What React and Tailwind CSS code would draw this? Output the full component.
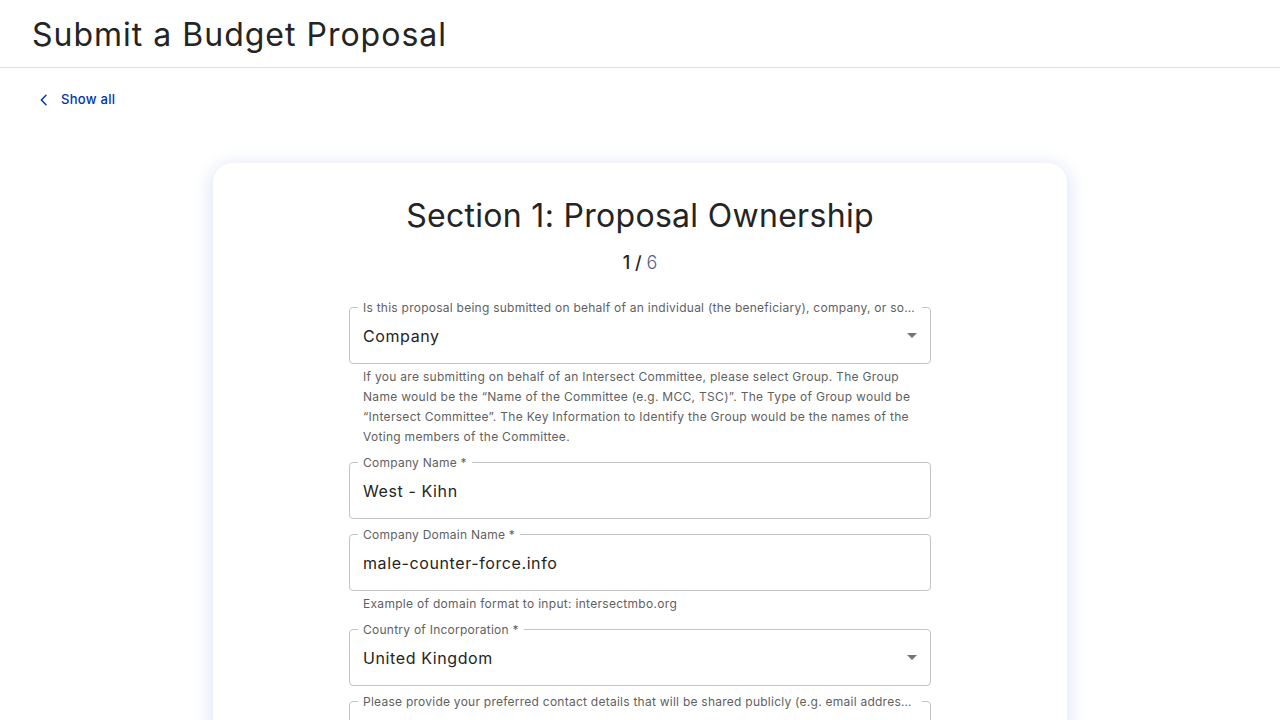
import React from "react";

const FONT = { fontFamily: "Inter, 'Noto Sans', sans-serif" };

function Caret() {
  return (
    <svg width="10" height="5" viewBox="0 0 10 5" className="shrink-0">
      <path d="M0 0 L10 0 L5 5 Z" fill="#757575" />
    </svg>
  );
}

function Field({ label, value, select, helper }) {
  return (
    <div className="flex flex-col">
      <fieldset className="border border-[#c4c4c4] rounded-[4px] px-[8px] pb-[7px] m-0 min-w-0">
        <legend className="px-[5px] text-[12px] leading-4 tracking-[0.25px] text-[#5f5f5f] max-w-full overflow-hidden text-ellipsis whitespace-nowrap">
          {label}
        </legend>
        <div className="h-10 px-[5px] flex items-center justify-between">
          <span className="text-[16px] tracking-[0.6px] text-[#242424]">{value}</span>
          {select && <Caret />}
        </div>
      </fieldset>
      {helper && (
        <p className="mt-[3px] mx-[14px] text-[12px] leading-5 tracking-[0.3px] text-[#5f5f5f]">{helper}</p>
      )}
    </div>
  );
}

export default function App() {
  return (
    <div className="w-[1280px] h-[720px] overflow-hidden bg-white text-[#242424]" style={FONT}>
      <header className="h-[68px] border-b border-[#e0e0e0] flex items-center px-8">
        <h1 className="text-[32px] leading-10 font-normal tracking-[1px] text-[#242424] mt-[3px]">Submit a Budget Proposal</h1>
      </header>
      <div className="px-[36px] pt-[22px] flex items-center gap-[9px]">
        <svg width="16" height="16" viewBox="0 0 24 24" fill="none" stroke="#0033ad" strokeWidth="2.2" strokeLinecap="round" strokeLinejoin="round">
          <path d="M15 5 L8 12 L15 19" />
        </svg>
        <span className="text-[13px] font-medium tracking-[0.3px] text-[#0033ad]">Show all</span>
      </div>
      <div className="flex justify-center pt-[53px]">
        <div className="w-[854px] bg-white rounded-[20px] shadow-[0_4px_18px_4px_#e4e8f8] pt-[33px] pb-10">
          <h2 className="text-center text-[32px] leading-10 font-normal tracking-[0.3px] text-[#242424]">Section 1: Proposal Ownership</h2>
          <div className="text-center text-[18px] leading-7 mt-[13px]">
            <span className="font-medium text-[#242424]">1 / </span>
            <span className="font-light text-[#506288]">6</span>
          </div>
          <div className="w-[582px] mx-auto mt-[23px] flex flex-col gap-[8px]">
            <Field
              label="Is this proposal being submitted on behalf of an individual (the beneficiary), company, or some other group?"
              value="Company"
              select
              helper={
                <>
                  If you are submitting on behalf of an Intersect Committee, please select Group. The Group
                  <br />
                  Name would be the “Name of the Committee (e.g. MCC, TSC)”. The Type of Group would be
                  <br />
                  “Intersect Committee”. The Key Information to Identify the Group would be the names of the
                  <br />
                  Voting members of the Committee.
                </>
              }
            />
            <Field label="Company Name *" value="West - Kihn" />
            <Field
              label="Company Domain Name *"
              value="male-counter-force.info"
              helper="Example of domain format to input: intersectmbo.org"
            />
            <Field label="Country of Incorporation *" value="United Kingdom" select />
            <Field
              label="Please provide your preferred contact details that will be shared publicly (e.g. email address, social handle)"
              value=""
            />
          </div>
        </div>
      </div>
    </div>
  );
}
